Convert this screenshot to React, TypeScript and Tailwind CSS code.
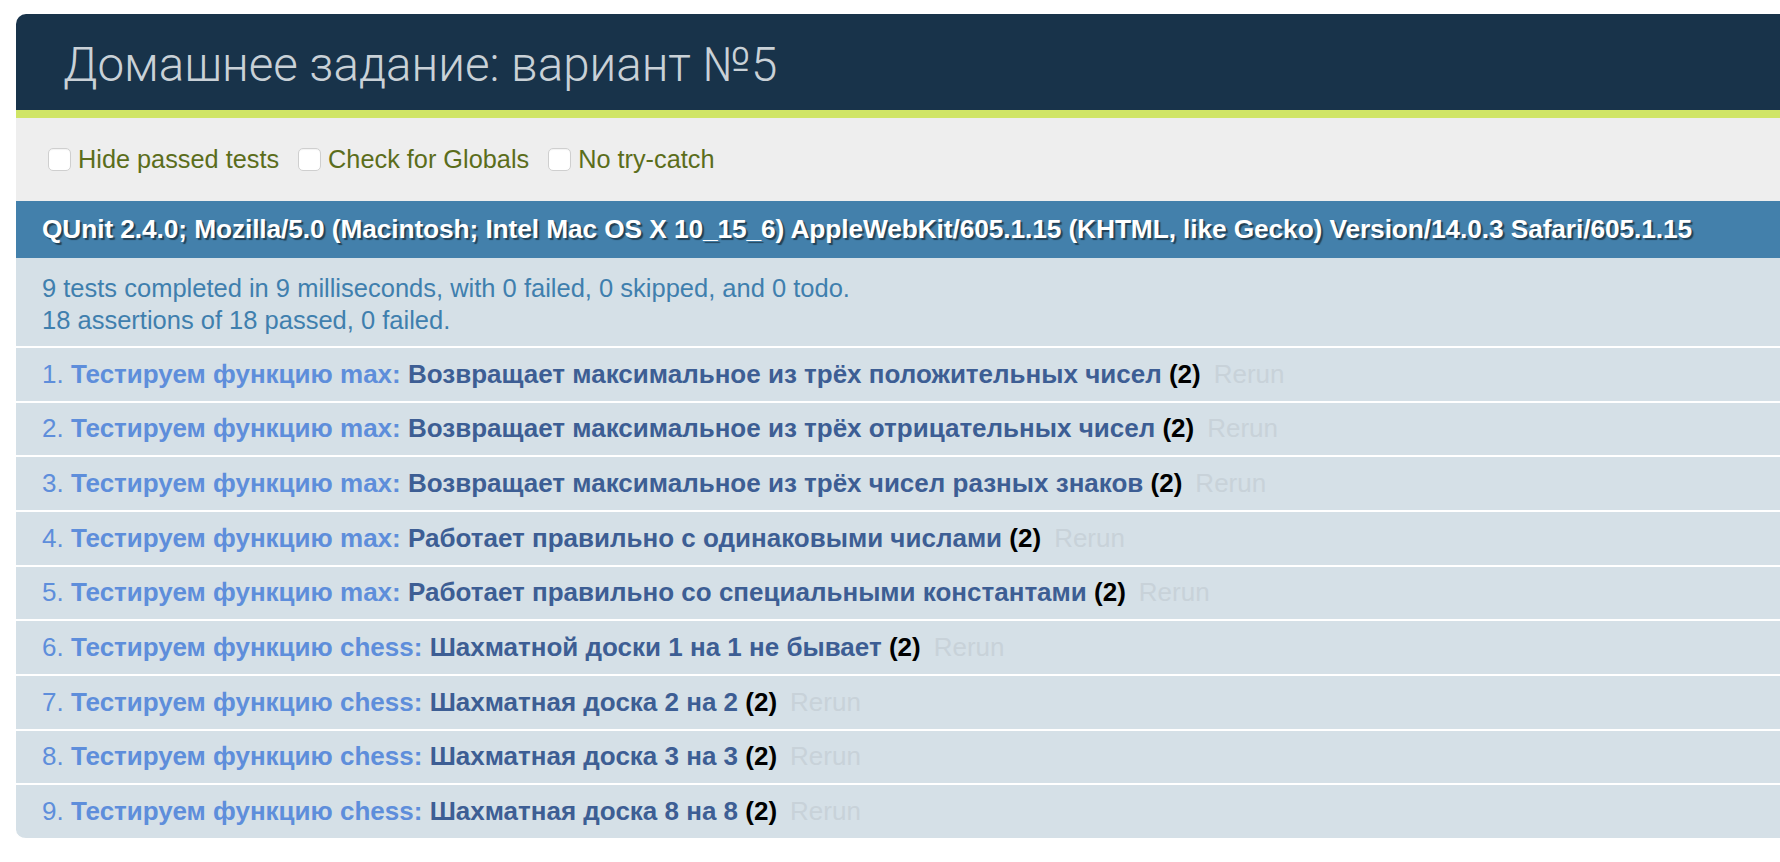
import React from "react"

const tests = [
  { mod: "max", name: "Возвращает максимальное из трёх положительных чисел" },
  { mod: "max", name: "Возвращает максимальное из трёх отрицательных чисел" },
  { mod: "max", name: "Возвращает максимальное из трёх чисел разных знаков" },
  { mod: "max", name: "Работает правильно с одинаковыми числами" },
  { mod: "max", name: "Работает правильно со специальными константами" },
  { mod: "chess", name: "Шахматной доски 1 на 1 не бывает" },
  { mod: "chess", name: "Шахматная доска 2 на 2" },
  { mod: "chess", name: "Шахматная доска 3 на 3" },
  { mod: "chess", name: "Шахматная доска 8 на 8" }
]

function Check({ label }: { label: string }) {
  return (
    <label className="flex items-center gap-[7px]">
      <span className="h-[23px] w-[23px] rounded-[5px] border border-[#cfcfcf] bg-white shadow-[inset_0_1px_1px_rgba(0,0,0,0.05)]" />
      <span>{label}</span>
    </label>
  )
}

export default function App() {
  return (
    <div className="min-h-screen w-full overflow-hidden bg-white font-['Liberation_Sans',Arial,sans-serif]">
      <div className="ml-4 mt-[14px] w-[1800px]">
        <h1 className="flex h-[96px] items-center rounded-tl-[10px] bg-[#18334a] pl-[47px] pt-[8px] font-['Roboto',sans-serif] text-[47.5px] font-light text-[#c9d1d7]">
          Домашнее задание: вариант №5
        </h1>
        <div className="h-[8px] bg-[#d0e566]" />

        <div className="flex h-[83px] items-center gap-[19px] bg-[#eeeeee] pl-[32px] text-[25.3px] text-[#5b6d1b]">
          <Check label="Hide passed tests" />
          <Check label="Check for Globals" />
          <Check label="No try-catch" />
        </div>

        <div className="flex h-[57px] items-center bg-[#4380ab] pl-[26px] text-[26.3px] font-bold tracking-[-0.1px] text-white [text-shadow:2px_2px_1px_rgba(0,0,0,0.5)]">
          QUnit 2.4.0; Mozilla/5.0 (Macintosh; Intel Mac OS X 10_15_6) AppleWebKit/605.1.15 (KHTML, like Gecko) Version/14.0.3 Safari/605.1.15
        </div>

        <div className="h-[90px] border-b-2 border-white bg-[#d5e0e7] pl-[26px] pt-[14px] text-[25.5px] leading-[32px] text-[#3f7fae]">
          <div>9 tests completed in 9 milliseconds, with 0 failed, 0 skipped, and 0 todo.</div>
          <div>18 assertions of 18 passed, 0 failed.</div>
        </div>

        <ol>
          {tests.map((t, i) => (
            <li
              key={i}
              className={
                "flex h-[54.67px] items-center border-b-2 border-white bg-[#d5e0e7] pl-[26px] text-[26px] text-[#5e8edb] " +
                (i === tests.length - 1 ? "rounded-bl-[10px] border-b-0" : "")
              }
            >
              <span>{i + 1}.&nbsp;</span>
              <strong className="font-bold">
                <span>Тестируем функцию {t.mod}:</span>{" "}
                <span className="text-[#3d5e94]">{t.name}</span>{" "}
                <span className="text-black">(2)</span>
              </strong>
              <span className="ml-[13px] text-[#c8d2d9]">Rerun</span>
            </li>
          ))}
        </ol>
      </div>
    </div>
  )
}
